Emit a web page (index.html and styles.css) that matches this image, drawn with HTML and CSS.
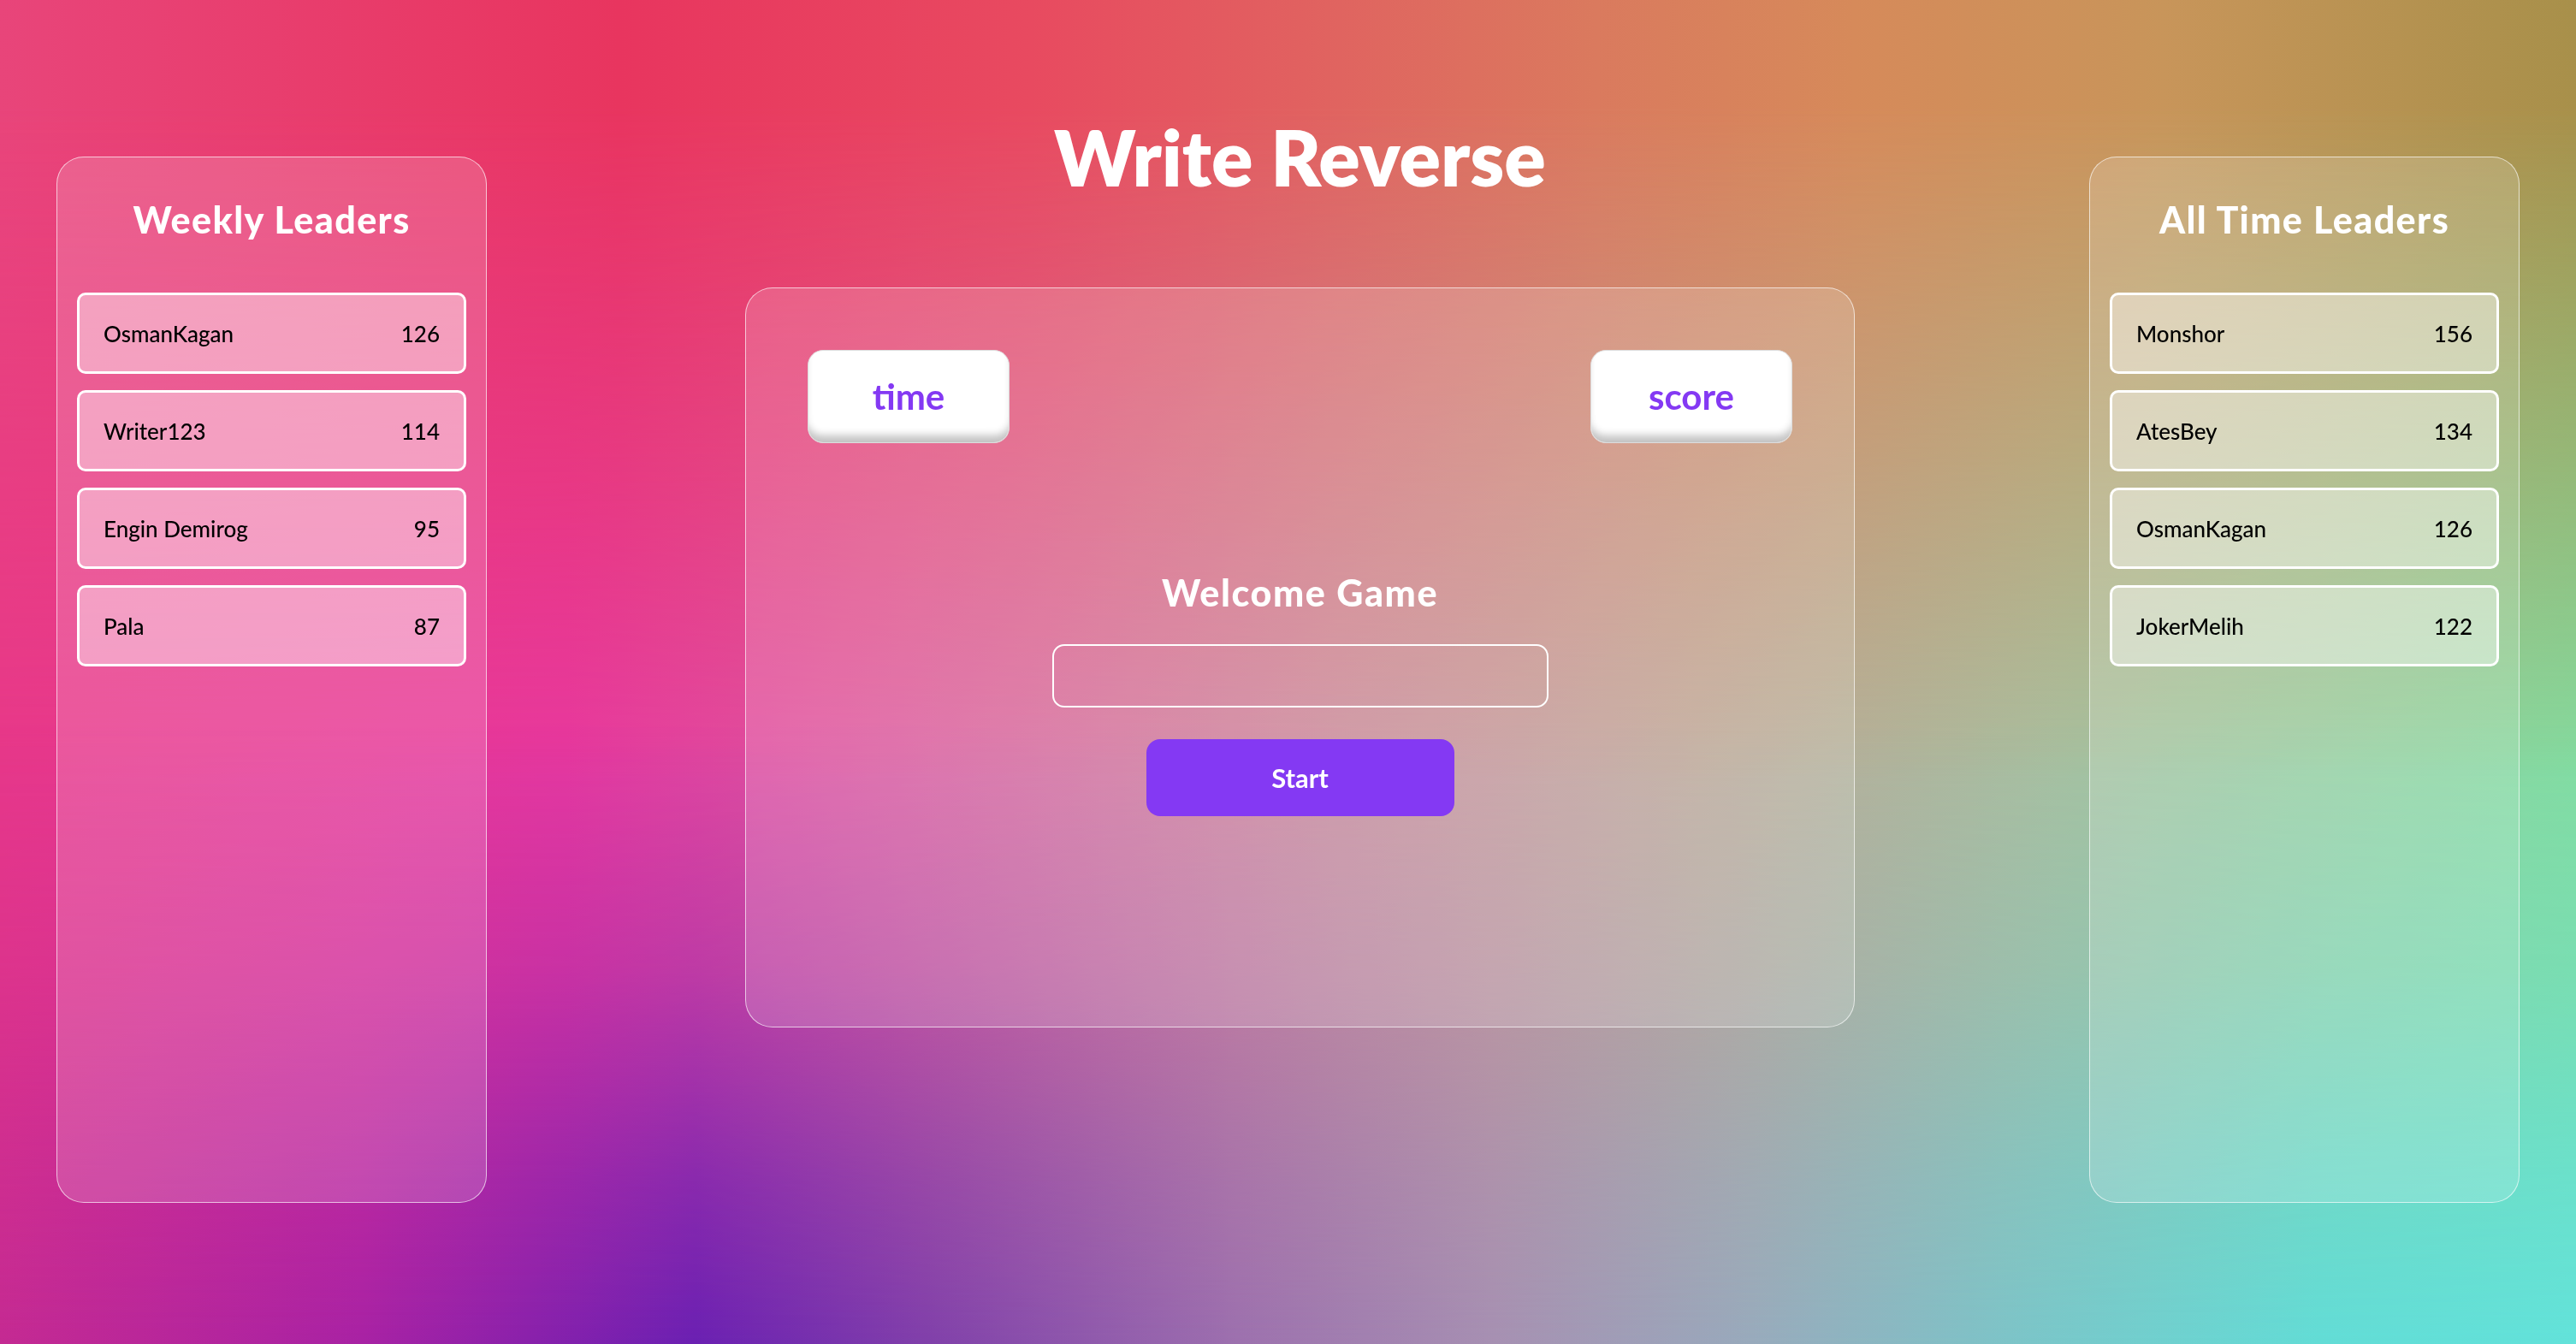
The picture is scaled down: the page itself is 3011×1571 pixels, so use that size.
FILE: index.html
```html
<!DOCTYPE html>
<html lang="en">
<head>
<meta charset="utf-8">
<title>Write Reverse</title>
<link rel="stylesheet" href="styles.css">
</head>
<body>
<div class="layout">
  <aside class="panel">
    <h2 class="panel-title">Weekly Leaders</h2>
    <ul class="leader-list">
      <li class="leader"><span>OsmanKagan</span><span>126</span></li>
      <li class="leader"><span>Writer123</span><span>114</span></li>
      <li class="leader"><span>Engin Demirog</span><span>95</span></li>
      <li class="leader"><span>Pala</span><span>87</span></li>
    </ul>
  </aside>

  <main class="center">
    <h1 class="title">Write Reverse</h1>
    <section class="game-card">
      <div class="stats">
        <div class="stat">time</div>
        <div class="stat">score</div>
      </div>
      <h3 class="welcome">Welcome Game</h3>
      <input class="word-input" type="text" aria-label="word">
      <button class="start-btn" type="button">Start</button>
    </section>
  </main>

  <aside class="panel">
    <h2 class="panel-title">All Time Leaders</h2>
    <ul class="leader-list">
      <li class="leader"><span>Monshor</span><span>156</span></li>
      <li class="leader"><span>AtesBey</span><span>134</span></li>
      <li class="leader"><span>OsmanKagan</span><span>126</span></li>
      <li class="leader"><span>JokerMelih</span><span>122</span></li>
    </ul>
  </aside>
</div>
</body>
</html>
```

FILE: styles.css
```css
* {
  box-sizing: border-box;
}

html, body {
  margin: 0;
  padding: 0;
}

body {
  min-height: 100vh;
  font-family: "Lato", "Noto Sans", sans-serif;
  color: #fff;
  background: linear-gradient(90deg, #e8388a 0%, #e839a0 22%, #dc5ca0 35%, #c88c9c 52%, #bca898 66%, #a8c0a0 80%, #84dca0 100%);
}

/* decorative background bands (under all content) */
body::before,
body::after {
  content: "";
  position: fixed;
  inset: 0;
  z-index: -1;
  pointer-events: none;
}

body::before {
  background: linear-gradient(90deg, #e8457a 0%, #e8355f 24%, #e84a60 40%, #e06460 52%, #da7a5e 62%, #d68a5a 72%, #c8955a 84%, #a8904a 100%);
  -webkit-mask-image: linear-gradient(180deg, #000 0%, #000 8%, rgba(0, 0, 0, 0) 58%);
  mask-image: linear-gradient(180deg, #000 0%, #000 8%, rgba(0, 0, 0, 0) 58%);
}

body::after {
  background: linear-gradient(90deg, #c42a92 0%, #a822a4 14%, #6a20b2 27%, #8040aa 36%, #9c70ae 48%, #a690b2 58%, #98aabc 68%, #7cc4c8 78%, #62dcd6 90%, #62e2da 100%);
  -webkit-mask-image: linear-gradient(0deg, #000 0%, rgba(0, 0, 0, 0.75) 12%, rgba(0, 0, 0, 0.3) 28%, rgba(0, 0, 0, 0) 46%);
  mask-image: linear-gradient(0deg, #000 0%, rgba(0, 0, 0, 0.75) 12%, rgba(0, 0, 0, 0.3) 28%, rgba(0, 0, 0, 0) 46%);
}

.layout {
  display: grid;
  grid-template-columns: 503px 1fr 503px;
  align-items: start;
  padding: 0 66px;
  min-height: 100vh;
}

/* Side panels */
.panel {
  margin-top: 183px;
  height: 1223px;
  border: 1px solid rgba(255, 255, 255, 0.65);
  border-radius: 32px;
  background: rgba(255, 255, 255, 0.16);
  padding: 51px 23px 0;
  display: flex;
  flex-direction: column;
  align-items: stretch;
}

.panel-title {
  margin: 0;
  font-size: 43px;
  line-height: 1;
  font-weight: 900;
  letter-spacing: 1.4px;
  text-align: center;
  color: #fff;
}

.leader-list {
  list-style: none;
  margin: 64px 0 0;
  padding: 0;
  display: flex;
  flex-direction: column;
  gap: 19px;
}

.leader {
  height: 95px;
  border: 3px solid #fff;
  border-radius: 10px;
  background: rgba(255, 255, 255, 0.42);
  padding: 0 28px;
  display: flex;
  align-items: center;
  justify-content: space-between;
  font-size: 26px;
  line-height: 1;
  color: #000;
  font-weight: 500;
}

/* Center column */
.center {
  padding-left: 28px;
  display: flex;
  flex-direction: column;
  align-items: center;
}

.title {
  margin: 138px 0 0;
  font-size: 90px;
  line-height: 1;
  font-weight: 800;
  color: #fff;
}

.game-card {
  margin-top: 108px;
  width: 1297px;
  height: 865px;
  border: 1px solid rgba(255, 255, 255, 0.65);
  border-radius: 32px;
  background: rgba(255, 255, 255, 0.16);
  padding: 72px;
  display: flex;
  flex-direction: column;
  align-items: center;
}

.stats {
  align-self: stretch;
  display: flex;
  justify-content: space-between;
}

.stat {
  width: 236px;
  height: 109px;
  background: #fff;
  border: 1px solid #ddd;
  border-radius: 18px;
  box-shadow: inset 0 -12px 10px -4px rgba(0, 0, 0, 0.24);
  display: flex;
  align-items: center;
  justify-content: center;
  padding-bottom: 2px;
  color: #8439f3;
  font-size: 42px;
  line-height: 1;
  font-weight: 700;
}

.welcome {
  margin: 153px 0 0;
  font-size: 43px;
  line-height: 1;
  font-weight: 900;
  letter-spacing: 1.6px;
  color: #fff;
}

.word-input {
  margin-top: 39px;
  width: 580px;
  height: 74px;
  border: 2px solid #fff;
  border-radius: 14px;
  background: transparent;
  outline: none;
  font-family: inherit;
  font-size: 28px;
  color: #fff;
  padding: 0 20px;
}

.start-btn {
  margin-top: 37px;
  width: 360px;
  height: 90px;
  border: none;
  border-radius: 16px;
  background: #8439f3;
  color: #fff;
  font-family: inherit;
  font-size: 31px;
  line-height: 1;
  font-weight: 700;
  cursor: pointer;
}
```
